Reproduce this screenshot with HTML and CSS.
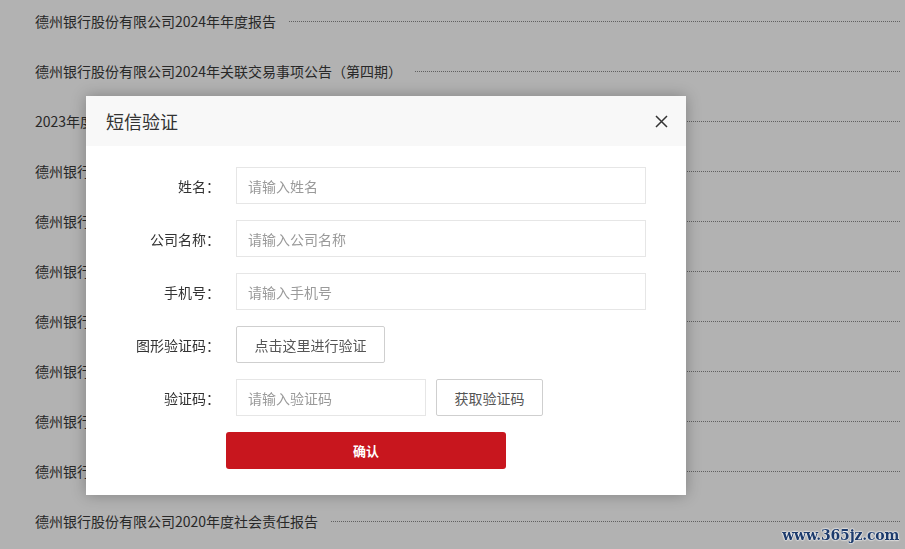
FILE: index.html
```html
<!DOCTYPE html>
<html lang="zh-CN">
<head>
<meta charset="utf-8">
<title>短信验证</title>
<link rel="stylesheet" href="styles.css">
</head>
<body>
<ul class="list">
  <li class="row"><span class="title">德州银行股份有限公司2024年年度报告</span><span class="dots"></span></li>
  <li class="row"><span class="title">德州银行股份有限公司2024年关联交易事项公告（第四期）</span><span class="dots"></span></li>
  <li class="row"><span class="title">2023年度德州银行股份有限公司社会责任报告</span><span class="dots"></span></li>
  <li class="row"><span class="title">德州银行股份有限公司2023年年度报告</span><span class="dots"></span></li>
  <li class="row"><span class="title">德州银行股份有限公司2023年关联交易事项公告</span><span class="dots"></span></li>
  <li class="row"><span class="title">德州银行股份有限公司2022年度社会责任报告</span><span class="dots"></span></li>
  <li class="row"><span class="title">德州银行股份有限公司2022年年度报告</span><span class="dots"></span></li>
  <li class="row"><span class="title">德州银行股份有限公司2021年度社会责任报告</span><span class="dots"></span></li>
  <li class="row"><span class="title">德州银行股份有限公司2021年年度报告</span><span class="dots"></span></li>
  <li class="row"><span class="title">德州银行股份有限公司2020年年度报告</span><span class="dots"></span></li>
  <li class="row"><span class="title">德州银行股份有限公司2020年度社会责任报告</span><span class="dots"></span></li>
</ul>

<div class="mask"></div>

<div class="modal">
  <div class="modal-head">
    <span class="modal-title">短信验证</span>
    <button class="close" aria-label="关闭">
      <svg width="13" height="13" viewBox="0 0 13 13"><path d="M1 1L12 12M12 1L1 12" stroke="#333" stroke-width="1.5" fill="none"/></svg>
    </button>
  </div>
  <form class="modal-body">
    <div class="field"><label class="label">姓名：</label><input class="input" placeholder="请输入姓名"></div>
    <div class="field"><label class="label">公司名称：</label><input class="input" placeholder="请输入公司名称"></div>
    <div class="field"><label class="label">手机号：</label><input class="input" placeholder="请输入手机号"></div>
    <div class="field"><label class="label">图形验证码：</label><button type="button" class="btn btn-verify">点击这里进行验证</button></div>
    <div class="field"><label class="label">验证码：</label><input class="input input-code" placeholder="请输入验证码"><button type="button" class="btn btn-code">获取验证码</button></div>
    <div class="field"><button type="button" class="submit">确认</button></div>
  </form>
</div>

<div class="watermark">www.365jz.com</div>
</body>
</html>
```

FILE: styles.css
```css
html, body {
  margin: 0;
  padding: 0;
  background: #fff;
  font-family: "Noto Sans CJK SC", "Noto Sans", sans-serif;
  overflow: hidden;
}

.list {
  list-style: none;
  margin: 0;
  padding: 11px 5px 0 35px;
}

.row {
  display: flex;
  align-items: center;
  height: 20px;
  margin-bottom: 30px;
}

.title {
  font-size: 14px;
  line-height: 20px;
  color: #3a3a3a;
  white-space: nowrap;
}

.dots {
  flex: 1;
  margin-left: 13px;
  border-top: 1px dotted #8a8a8a;
  height: 0;
}

.mask {
  position: fixed;
  inset: 0;
  background: rgba(0, 0, 0, 0.3);
}

.modal {
  position: fixed;
  left: 86px;
  top: 96px;
  width: 600px;
  background: #fff;
  box-shadow: 0 0 14px rgba(0, 0, 0, 0.28);
}

.modal-head {
  height: 50px;
  background: #f8f8f8;
  display: flex;
  align-items: center;
  justify-content: space-between;
  padding: 0 18px 0 20px;
}

.modal-title {
  font-size: 18px;
  color: #333;
}

.close {
  border: 0;
  background: none;
  padding: 0;
  width: 13px;
  height: 13px;
  display: flex;
}

.modal-body {
  margin: 0;
  padding: 21px 0 26px;
  display: flex;
  flex-direction: column;
  gap: 16px;
}

.field {
  display: flex;
  align-items: center;
  height: 37px;
}

.label {
  width: 134px;
  text-align: right;
  font-size: 14px;
  color: #333;
  margin-right: 16px;
}

.input {
  box-sizing: border-box;
  width: 410px;
  height: 37px;
  border: 1px solid #e6e6e6;
  padding: 0 11px;
  font-family: inherit;
  font-size: 14px;
  color: #333;
  outline: none;
}

.input::placeholder {
  color: #9a9a9a;
}

.input-code {
  width: 190px;
}

.btn {
  box-sizing: border-box;
  height: 37px;
  border: 1px solid #cfcfcf;
  border-radius: 2px;
  background: #fff;
  font-family: inherit;
  font-size: 14px;
  color: #555;
  padding: 0;
}

.btn-verify {
  width: 149px;
}

.btn-code {
  width: 107px;
  margin-left: 10px;
}

.submit {
  margin-left: 140px;
  width: 280px;
  height: 37px;
  border: 0;
  border-radius: 3px;
  background: #c8161e;
  color: #fff;
  font-family: inherit;
  font-size: 13px;
  font-weight: bold;
}

.watermark {
  position: fixed;
  right: 6px;
  bottom: 6px;
  font-family: "DejaVu Serif", serif;
  font-weight: bold;
  font-size: 14px;
  color: #1d3b6c;
  text-shadow: 0 0 2px #fff, 0 0 2px #fff, 0 0 1px #fff;
  letter-spacing: -0.2px;
}
```
